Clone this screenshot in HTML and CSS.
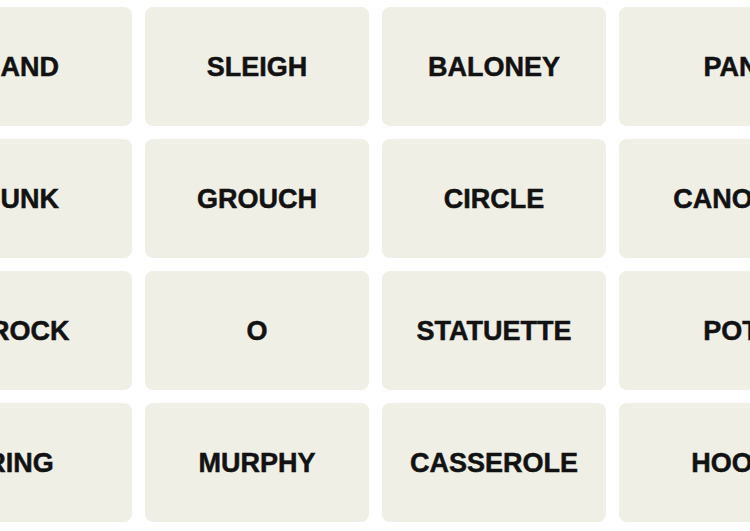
FILE: index.html
```html
<!DOCTYPE html>
<html>
<head>
<meta charset="utf-8">
<link rel="stylesheet" href="styles.css">
</head>
<body>
<div class="board">
  <div class="tile">BAND</div>
  <div class="tile">SLEIGH</div>
  <div class="tile">BALONEY</div>
  <div class="tile">PAN</div>
  <div class="tile">BUNK</div>
  <div class="tile">GROUCH</div>
  <div class="tile">CIRCLE</div>
  <div class="tile">CANOPY</div>
  <div class="tile">CROCK</div>
  <div class="tile">O</div>
  <div class="tile">STATUETTE</div>
  <div class="tile">POT</div>
  <div class="tile">RING</div>
  <div class="tile">MURPHY</div>
  <div class="tile">CASSEROLE</div>
  <div class="tile">HOOP</div>
</div>
</body>
</html>
```
FILE: styles.css
```css
html, body {
  margin: 0;
  padding: 0;
  background: #ffffff;
  overflow: hidden;
  width: 750px;
  height: 531px;
}
.board {
  display: grid;
  grid-template-columns: repeat(4, 224px);
  grid-auto-rows: 119px;
  gap: 13px;
  margin-left: -92px;
  margin-top: 7px;
  width: max-content;
}
.tile {
  background: #efefe6;
  border-radius: 8px;
  display: flex;
  align-items: center;
  justify-content: center;
  padding-top: 2px;
  box-sizing: border-box;
  font-family: "Liberation Sans", Arial, sans-serif;
  font-weight: 700;
  font-size: 27px;
  color: #121212;
  -webkit-text-stroke: 0.5px #121212;
}
```
